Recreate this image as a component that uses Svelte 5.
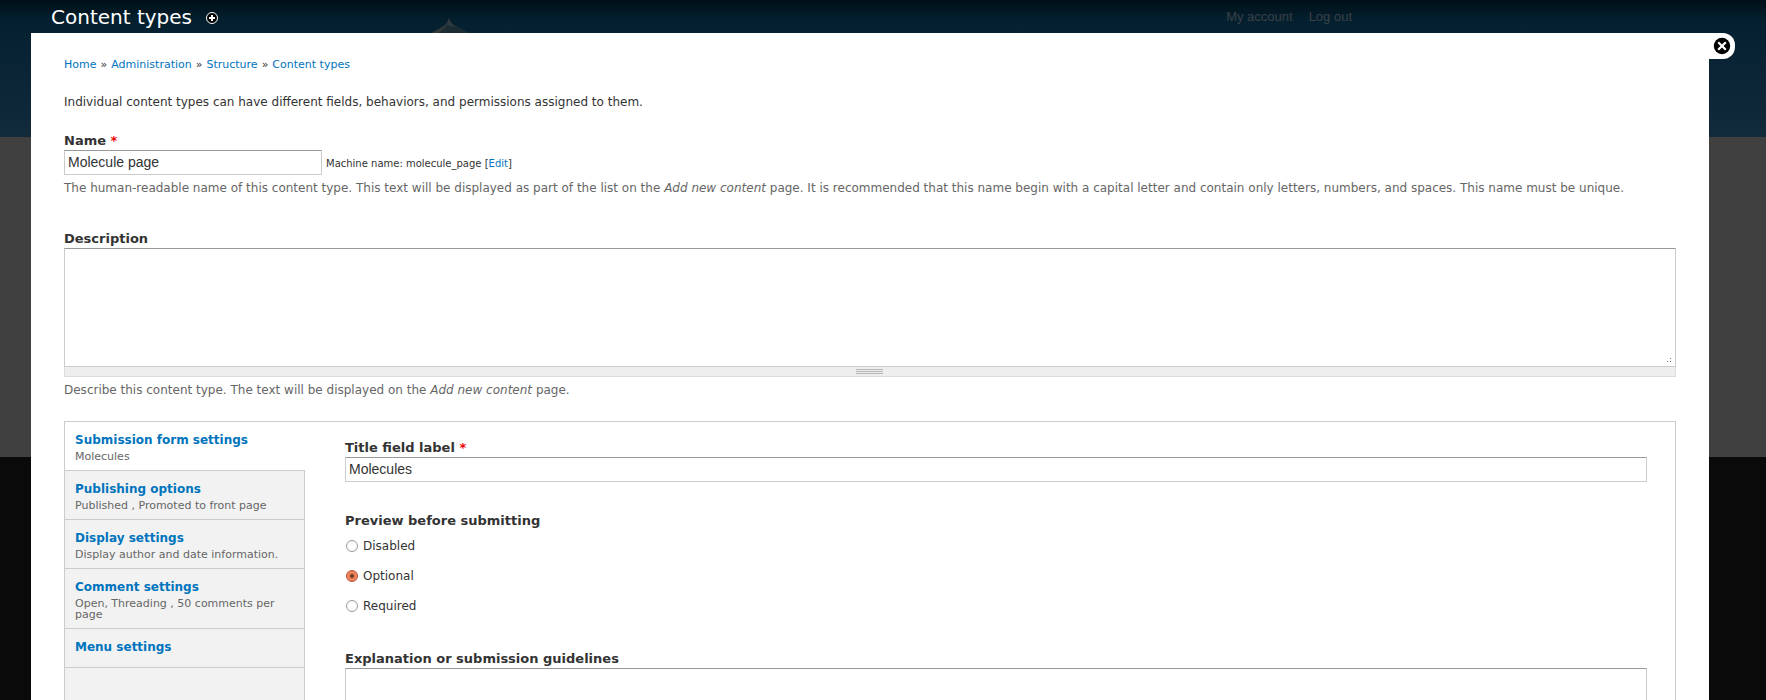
<script lang="ts">
  const breadcrumbs = ['Home', 'Administration', 'Structure', 'Content types'];

  const tabs = [
    { title: 'Submission form settings', summary: 'Molecules' },
    { title: 'Publishing options', summary: 'Published , Promoted to front page' },
    { title: 'Display settings', summary: 'Display author and date information.' },
    { title: 'Comment settings', summary: 'Open, Threading , 50 comments per page' },
    { title: 'Menu settings', summary: '' }
  ];

  const previewOptions = ['Disabled', 'Optional', 'Required'];

  let activeTab = $state(0);
  let name = $state('Molecule page');
  let description = $state('');
  let titleLabel = $state('Molecules');
  let preview = $state('Optional');
  let guidelines = $state('');
</script>

<div class="page">
  <svg class="site-logo" width="48" height="24" viewBox="0 0 48 24" aria-hidden="true">
    <path d="M0 24V17C7 12 15 11 17 2C20 10 29 12 39 18L48 24Z" fill="#1c2c35" />
    <path d="M0 24V17C7 12 15 11 17 2C17 9 13 12 8 16L3 24Z" fill="#33383b" />
    <path d="M17 2C18 7 20 9 24 11C20 11 17 10 15 8Z" fill="#303b41" />
  </svg>

  <header class="header">
    <h1 class="page-title">Content types</h1>
    <button class="icon-button" type="button" aria-label="Add to shortcuts">
      <svg width="14" height="16" viewBox="0 0 14 16">
        <circle cx="7" cy="9" r="5.5" fill="#000" stroke="#fff" />
        <path d="M7 6V12M4 9H10" stroke="#fff" stroke-width="2" />
      </svg>
    </button>
    <nav class="user-menu">
      <a href="#account">My account</a>
      <a href="#logout">Log out</a>
    </nav>
  </header>

  <main class="overlay">
    <button class="icon-button close" type="button" aria-label="Close overlay">
      <svg width="18" height="18" viewBox="0 0 18 18">
        <circle cx="9" cy="9" r="8.2" fill="#000" />
        <path d="M5.2 5.2L12.8 12.8M12.8 5.2L5.2 12.8" stroke="#fff" stroke-width="2.2" />
      </svg>
    </button>

    <nav class="breadcrumb">
      {#each breadcrumbs as crumb, i (crumb)}
        {#if i > 0}<span>»</span>{/if}
        <a href="#top">{crumb}</a>
      {/each}
    </nav>

    <p class="intro">
      Individual content types can have different fields, behaviors, and permissions assigned to them.
    </p>

    <form>
      <div class="form-item">
        <label class="label" for="name">Name <span class="required">*</span></label>
        <div class="name-row">
          <input id="name" class="text-field name-field" type="text" bind:value={name} />
          <span class="machine-name">Machine name: molecule_page [<a href="#edit">Edit</a>]</span>
        </div>
        <p class="help">
          The human-readable name of this content type. This text will be displayed as part of the list on the
          <em>Add new content</em> page. It is recommended that this name begin with a capital letter and contain only
          letters, numbers, and spaces. This name must be unique.
        </p>
      </div>

      <div class="form-item">
        <label class="label" for="description">Description</label>
        <textarea id="description" class="text-area" bind:value={description}></textarea>
        <div class="grippie">
          <svg width="28" height="5" viewBox="0 0 28 5" aria-hidden="true">
            <path d="M0 0.5H27M0 2.5H27M0 4.5H27" stroke="#b5b5b5" />
          </svg>
        </div>
        <p class="help">
          Describe this content type. The text will be displayed on the <em>Add new content</em> page.
        </p>
      </div>

      <div class="vertical-tabs">
        <ul class="tab-list">
          {#each tabs as tab, i (tab.title)}
            <li class="tab" class:active={activeTab === i}>
              <a href="#tab-{i}" onclick={() => (activeTab = i)}>
                <strong class="tab-title">{tab.title}</strong>
                <span class="tab-summary">{tab.summary}</span>
              </a>
            </li>
          {/each}
        </ul>

        <div class="pane">
          <div class="pane-item">
            <label class="label" for="title-label">Title field label <span class="required">*</span></label>
            <input id="title-label" class="text-field" type="text" bind:value={titleLabel} />
          </div>

          <fieldset class="pane-item">
            <legend class="label">Preview before submitting</legend>
            {#each previewOptions as option (option)}
              <label class="radio-row">
                <input class="radio" type="radio" name="preview" value={option} bind:group={preview} />
                {option}
              </label>
            {/each}
          </fieldset>

          <div class="pane-item">
            <label class="label" for="guidelines">Explanation or submission guidelines</label>
            <textarea id="guidelines" class="text-area" bind:value={guidelines}></textarea>
          </div>
        </div>
      </div>
    </form>
  </main>
</div>

<style>
  :global(body) {
    margin: 0;
  }

  /* the page behind the overlay stays locked to the viewport */
  .page {
    position: relative;
    height: 100vh;
    overflow: hidden;
    color: #333;
    font-family: 'DejaVu Sans', sans-serif;
    font-size: 12px;
    line-height: 18px;
    background:
      linear-gradient(#000f17, #04202f 20px, #072233 40px, #122a3a 137px, #404040 137px, #404040 457px, #0a0a0a 457px);
  }

  a {
    color: #0074bd;
    text-decoration: none;
  }

  .site-logo {
    position: absolute;
    top: 16px;
    left: 432px;
  }

  .header {
    position: relative;
    display: flex;
    align-items: center;
    height: 33px;
    padding-left: 51px;
  }

  .page-title {
    margin: 0 13px 0 0;
    color: #fff;
    font-size: 20px;
    font-weight: normal;
    line-height: 32px;
  }

  .icon-button {
    display: flex;
    padding: 0;
    border: 0;
    background: none;
    cursor: pointer;
  }

  .user-menu {
    display: flex;
    gap: 16px;
    margin-left: auto;
    padding-right: 414px;
    font-family: 'Liberation Sans', sans-serif;
    font-size: 13px;
  }

  .user-menu a {
    color: #3a4147;
  }

  .overlay {
    position: relative;
    min-height: 100%;
    margin: 0 57px 0 31px;
    padding: 24px 33px;
    box-sizing: border-box;
    background: #fff;
  }

  .close {
    position: absolute;
    top: 0;
    left: 100%;
    width: 26px;
    height: 26px;
    padding: 4px;
    border-radius: 0 12px 12px 0;
    background: #fff;
  }

  .breadcrumb {
    display: flex;
    gap: 4px;
    font-size: 11px;
    line-height: 16px;
  }

  .intro {
    margin: 20px 0 19px;
  }

  .form-item {
    margin-bottom: 31px;
  }

  .label {
    display: block;
    padding: 2px 0 0;
    font-size: 13px;
    font-weight: bold;
    line-height: 18px;
  }

  .required {
    color: #e00;
  }

  .text-field,
  .text-area {
    display: block;
    width: 100%;
    box-sizing: border-box;
    margin: 0;
    border: 1px solid #ccc;
    border-top-color: #999;
    border-radius: 0;
    color: #333;
    background: #fff;
    font-family: 'Liberation Sans', sans-serif;
    font-size: 14px;
  }

  .text-field {
    height: 25px;
    padding: 1px 3px 3px;
  }

  .text-area {
    height: 119px;
    padding: 2px;
  }

  /* three dots in the corner */
  .text-area::-webkit-resizer {
    background:
      linear-gradient(#777, #777) 7px 10px / 1px 1px no-repeat,
      linear-gradient(#777, #777) 10px 10px / 1px 1px no-repeat,
      linear-gradient(#777, #777) 10px 7px / 1px 1px no-repeat;
  }

  .name-row {
    display: flex;
    align-items: center;
    gap: 4px;
  }

  .name-field {
    width: 258px;
  }

  .machine-name {
    padding-top: 2px;
    font-size: 10px;
  }

  .help {
    margin: 4px 0 0;
    color: #666;
  }

  .grippie {
    display: flex;
    align-items: center;
    justify-content: center;
    height: 10px;
    box-sizing: border-box;
    border: 1px solid #ddd;
    border-top: 0;
    background: #eee;
    cursor: s-resize;
  }

  .vertical-tabs {
    display: flex;
    margin-top: -9px;
    border: 1px solid #ccc;
  }

  .tab-list {
    width: 240px;
    flex-shrink: 0;
    box-sizing: border-box;
    margin: 0;
    padding: 0;
    list-style: none;
    background: linear-gradient(#ccc, #ccc) right / 1px 100% no-repeat #f2f2f2;
  }

  .tab {
    border-bottom: 1px solid #ccc;
  }

  .tab.active {
    background: #fff;
  }

  .tab a {
    display: flex;
    flex-direction: column;
    gap: 2px;
    padding: 9px 10px 8px;
  }

  .tab-summary {
    min-height: 1px;
    color: #666;
    font-size: 11px;
    line-height: 11px;
  }

  .pane {
    flex: 1;
    padding: 15px 28px 30px 40px;
  }

  .pane-item {
    min-width: 0;
    margin: 0 0 28px;
    padding: 0;
    border: 0;
  }

  .radio-row {
    display: flex;
    align-items: center;
    gap: 5px;
    height: 30px;
    padding-top: 2px;
    box-sizing: border-box;
  }

  .radio {
    appearance: none;
    width: 12px;
    height: 12px;
    margin: 0 0 0 1px;
    border: 1px solid #999;
    border-radius: 50%;
    background: #fff;
  }

  .radio:checked {
    border-color: #b9502f;
    background: radial-gradient(circle, #6a3822 0 1px, #f08560 3px);
  }
</style>
